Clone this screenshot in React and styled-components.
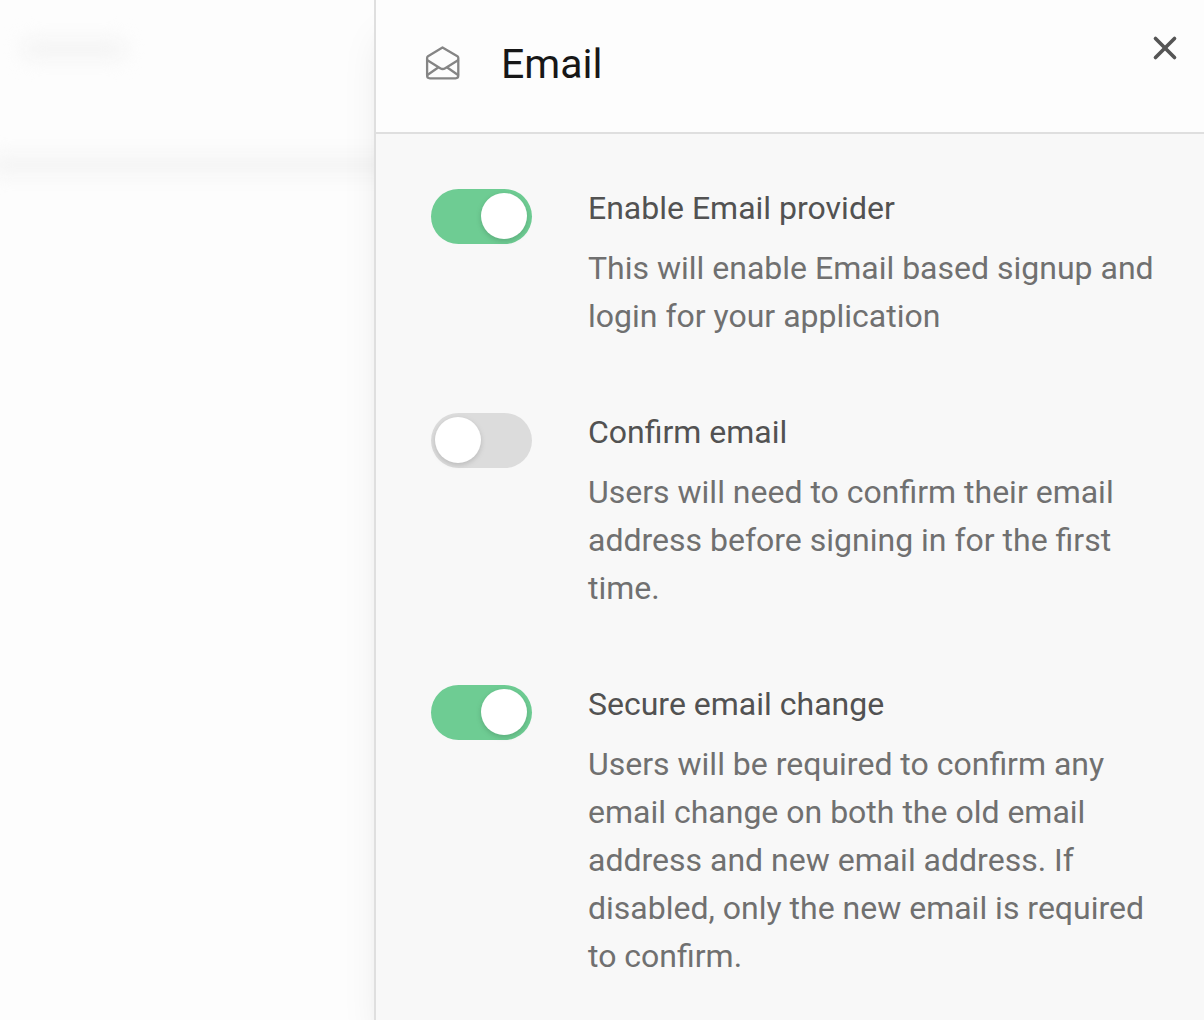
import React, { useState } from "react";
import styled, { createGlobalStyle } from "styled-components";
import { X } from "lucide-react";

const GlobalStyle = createGlobalStyle`
  *, *::before, *::after { box-sizing: border-box; }
  body {
    margin: 0;
    background: #fdfdfd;
    font-family: Roboto, "Liberation Sans", sans-serif;
  }
`;

const Layout = styled.div`
  display: flex;
  min-height: 100vh;
  overflow: hidden;
`;

const Backdrop = styled.div`
  flex: 1 1 0;
  min-width: 0;
  padding-top: 40px;
  overflow: hidden;
`;

const Haze = styled.div`
  width: ${(p) => p.$width};
  height: 18px;
  margin: 0 0 98px ${(p) => p.$indent};
  border-radius: 8px;
  background: #f3f3f3;
  filter: blur(10px);
`;

const Panel = styled.section`
  position: relative;
  flex: 0 1 830px;
  display: flex;
  flex-direction: column;
  border-left: 2px solid #dfdfdf;
  background: #f8f8f8;
  box-shadow: 0 30px 40px -10px rgba(0, 0, 0, 0.1),
    0 20px 20px -10px rgba(0, 0, 0, 0.04);
`;

const Header = styled.header`
  display: flex;
  align-items: flex-start;
  padding: 29px 20px 33px 49px;
  border-bottom: 2px solid #dfdfdf;
  background: #fdfdfd;
`;

const HeaderIcon = styled.svg`
  flex: none;
  width: 36px;
  height: 36px;
  margin: 16px 40px 0 0;
  fill: none;
  stroke: #858585;
  stroke-width: 2.3;
  stroke-linecap: round;
  stroke-linejoin: round;
`;

const Title = styled.h1`
  flex: 1;
  margin: 0;
  color: #171717;
  font-size: 41px;
  font-weight: 400;
  line-height: 70px;
`;

const CloseButton = styled.button`
  display: flex;
  padding: 0;
  border: 0;
  background: none;
  color: #555;
  cursor: pointer;
`;

const Settings = styled.div`
  display: flex;
  flex-direction: column;
  gap: 68px;
  padding: 50px 44px 40px 55px;
`;

const Row = styled.div`
  display: flex;
  align-items: flex-start;
  gap: 56px;
`;

const Toggle = styled.input`
  appearance: none;
  flex: none;
  width: 101px;
  height: 55px;
  margin: 5px 0 0;
  padding: 4px;
  border-radius: 28px;
  background: #dcdcdc;
  cursor: pointer;

  &::before {
    content: "";
    display: block;
    width: 46px;
    height: 46px;
    border-radius: 50%;
    background: #fff;
    box-shadow: 0 2px 6px rgba(0, 0, 0, 0.1), 0 2px 4px rgba(0, 0, 0, 0.06);
  }

  &:checked {
    background: #6ecc93;
  }

  &:checked::before {
    margin-left: 46px;
  }
`;

const Copy = styled.div`
  flex: 1;
  min-width: 0;
  font-size: 32px;
  line-height: 48px;
`;

const Label = styled.label`
  display: block;
  margin-bottom: 12px;
  color: #525252;
`;

const Description = styled.p`
  margin: 0;
  color: #707070;
`;

function MailOpenIcon() {
  return (
    <HeaderIcon viewBox="0 0 36 36" aria-hidden="true">
      <path d="M17.5 2.4 L3 11.2 Q2.1 11.9 2.1 13 V30.6 Q2.1 33.3 4.8 33.3 H30.6 Q33.3 33.3 33.3 30.6 V13 Q33.3 11.9 32.4 11.2 Z" />
      <path d="M2.4 15.2 L15.2 23.2 Q17.6 24.8 20.2 23.2 L33 15.2" />
      <path d="M2.4 30 L12.8 22.8 M33 30 L22.6 22.8" />
    </HeaderIcon>
  );
}

function Setting({ id, title, defaultOn, children }) {
  const [on, setOn] = useState(defaultOn);
  return (
    <Row>
      <Toggle
        id={id}
        type="checkbox"
        role="switch"
        checked={on}
        aria-describedby={`${id}-description`}
        onChange={(e) => setOn(e.target.checked)}
      />
      <Copy>
        <Label htmlFor={id}>{title}</Label>
        <Description id={`${id}-description`}>{children}</Description>
      </Copy>
    </Row>
  );
}

export default function App() {
  return (
    <>
      <GlobalStyle />
      <Layout>
        <Backdrop aria-hidden="true">
          <Haze $width="104px" $indent="22px" />
          <Haze $width="110%" $indent="-12px" />
        </Backdrop>
        <Panel aria-labelledby="panel-title">
          <Header>
            <MailOpenIcon />
            <Title id="panel-title">Email</Title>
            <CloseButton type="button" aria-label="Close">
              <X size={38} strokeWidth={2.3} />
            </CloseButton>
          </Header>
          <Settings>
            <Setting id="enable-email" title="Enable Email provider" defaultOn>
              This will enable Email based signup and login for your application
            </Setting>
            <Setting id="confirm-email" title="Confirm email" defaultOn={false}>
              Users will need to confirm their email address before signing in
              for the first time.
            </Setting>
            <Setting id="secure-change" title="Secure email change" defaultOn>
              Users will be required to confirm any email change on both the
              old email address and new email address. If disabled, only the
              new email is required to confirm.
            </Setting>
          </Settings>
        </Panel>
      </Layout>
    </>
  );
}
